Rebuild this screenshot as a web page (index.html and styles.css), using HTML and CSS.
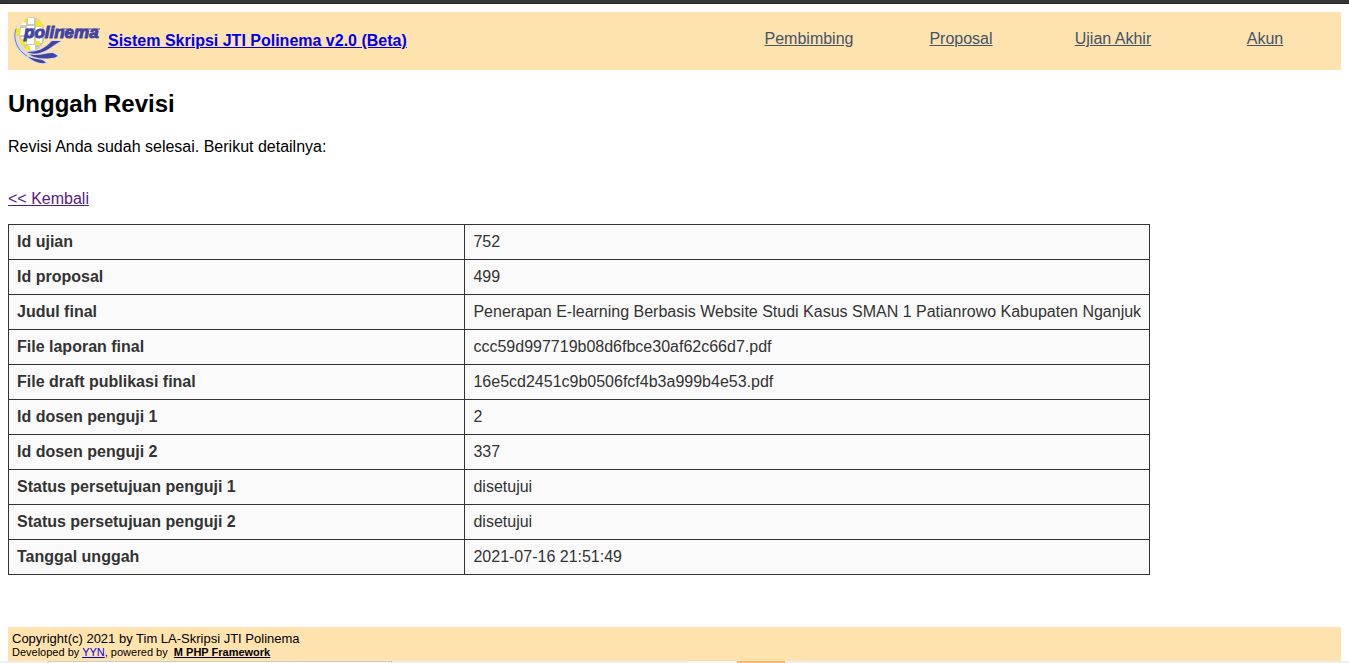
FILE: index.html
```html
<!DOCTYPE html>
<html lang="id">
<head>
<meta charset="utf-8">
<title>Unggah Revisi</title>
<link rel="stylesheet" href="styles.css">
</head>
<body>
<div class="topbar"></div>
<div class="page">
  <header class="header">
    <a class="brand" href="#">
      <svg class="logo" viewBox="0 0 92 54" role="img" aria-label="Polinema">
        <path d="M7 8C-1 16-1 32 10 41c6 5 13 7 20 9l6-1c-8-3-14-6-18-11C6 33 2 20 7 8z" fill="#d9dbe2"/>
        <ellipse cx="20" cy="20" rx="13" ry="17" fill="#c9c8bd"/>
        <path d="M16 4h6v6h-6zM15 12h7v8h-7zM9 14h4v7H8zM24 13h6v8h-6zM15 23h7v7h-7zM24 23h6v6h-6zM9 23h4l1 7h-3zM16 31h7v5h-5zM9 11l3-5h2v5z" fill="#fff"/>
        <path d="M24 4l6 5 1 4-7-1zM4 14h4l-1 8H4zM8 25h5v6H9zM23 27h5v4h-5zM13 32h5v4h-4zM11 8l3-4h1v5z" fill="#f2ea1c"/>
        <path d="M4 15c-3 8 0 18 7 24 4 4 9 5 14 7" fill="none" stroke="#7b7db4" stroke-width="1"/>
        <g fill="#4344a2" stroke="#dedee6" stroke-width="2" paint-order="stroke">
          <path d="M49 27H40C33 34 27 38 15 38c5 3 13 2 20-2 5-3 8-6 14-9z"/>
          <path d="M17 40c9 3 15-1 24-1l5 3c-3 1-3 2-6 2-9 1-17 1-23-4z"/>
          <path d="M15 42c7 4 12 2 17 5l2 2c-9 1-14-3-19-7z"/>
        </g>
        <text class="wordmark" x="12" y="24">polinema</text>
        <path d="M15 15h8M50 15h9M65 15h23" fill="none" stroke="#4344a2" stroke-width="1"/>
      </svg>
      <span>Sistem Skripsi JTI Polinema v2.0 (Beta)</span>
    </a>
    <nav class="nav">
      <a href="#">Pembimbing</a>
      <a href="#">Proposal</a>
      <a href="#">Ujian Akhir</a>
      <a href="#">Akun</a>
    </nav>
  </header>
  <main>
    <h1 class="title">Unggah Revisi</h1>
    <p class="intro">Revisi Anda sudah selesai. Berikut detailnya:</p>
    <a class="back" href="#">&lt;&lt; Kembali</a>
    <table class="details">
      <tr><th scope="row">Id ujian</th><td>752</td></tr>
      <tr><th scope="row">Id proposal</th><td>499</td></tr>
      <tr><th scope="row">Judul final</th><td>Penerapan E-learning Berbasis Website Studi Kasus SMAN 1 Patianrowo Kabupaten Nganjuk</td></tr>
      <tr><th scope="row">File laporan final</th><td>ccc59d997719b08d6fbce30af62c66d7.pdf</td></tr>
      <tr><th scope="row">File draft publikasi final</th><td>16e5cd2451c9b0506fcf4b3a999b4e53.pdf</td></tr>
      <tr><th scope="row">Id dosen penguji 1</th><td>2</td></tr>
      <tr><th scope="row">Id dosen penguji 2</th><td>337</td></tr>
      <tr><th scope="row">Status persetujuan penguji 1</th><td>disetujui</td></tr>
      <tr><th scope="row">Status persetujuan penguji 2</th><td>disetujui</td></tr>
      <tr><th scope="row">Tanggal unggah</th><td>2021-07-16 21:51:49</td></tr>
    </table>
  </main>
  <footer class="footer">
    <div class="copyright">Copyright(c) 2021 by Tim LA-Skripsi JTI Polinema</div>
    <div class="credits">Developed by <a class="author" href="#">YYN</a>, powered by &nbsp;<a class="framework" href="#">M PHP Framework</a></div>
  </footer>
</div>
<div class="taskbar"><div class="search"></div><div class="task"></div><div class="task task-active"></div></div>
</body>
</html>
```
FILE: styles.css
```css
body {
  margin: 0;
  min-height: 100vh;
  display: flex;
  flex-direction: column;
  background: #fff;
  color: #000;
  font: 16px/18px "Liberation Sans", Arial, sans-serif;
}

.topbar {
  height: 4px;
  box-sizing: border-box;
  background: #35363a;
  border-bottom: 1px solid #202124;
}

.page {
  flex: 1;
  display: flex;
  flex-direction: column;
  padding: 8px 8px 0;
}

.header {
  display: flex;
  justify-content: space-between;
  height: 58px;
  background: #ffe3af;
}

.brand {
  display: flex;
  align-items: center;
  gap: 4px;
  padding-left: 4px;
  color: #0000ee;
  font-weight: bold;
}

.logo {
  width: 92px;
  height: 54px;
}

.wordmark {
  fill: #4344a2;
  stroke: #4344a2;
  stroke-width: 1px;
  font: italic bold 17px "Liberation Sans", Arial, sans-serif;
}

.nav {
  display: grid;
  grid-template-columns: repeat(4, 152px);
  padding-top: 18px;
  text-align: center;
}

.nav a {
  color: #44546a;
}

.title {
  margin: 20px 0;
  font-size: 24px;
  line-height: 28px;
}

.intro {
  margin: 0 0 34px;
}

.back {
  color: #551a8b;
}

.details {
  margin-top: 16px;
  border-collapse: collapse;
  color: #333;
  background: #fafafa;
}

.details th,
.details td {
  padding: 8px;
  border: 1px solid #333;
  text-align: left;
}

.details th {
  width: 40%;
}

.footer {
  margin-top: auto;
  padding: 4px 4px 2px;
  background: #ffe3af;
}

.copyright {
  font-size: 13px;
  line-height: 15px;
}

.credits {
  font-size: 11px;
  line-height: 13px;
}

.author {
  color: #0000ee;
}

.framework {
  color: #000;
  font-weight: bold;
}

.taskbar {
  display: flex;
  height: 2px;
  padding-left: 48px;
  background: #eee;
}

.search {
  width: 344px;
  margin-right: 296px;
  box-sizing: border-box;
  border: 1px solid #ccc;
  border-bottom: 0;
  background: #fff;
}

.task {
  width: 48px;
  margin-right: 1px;
  background: #fafafa;
}

.task-active {
  background: #fdb572;
}
```
